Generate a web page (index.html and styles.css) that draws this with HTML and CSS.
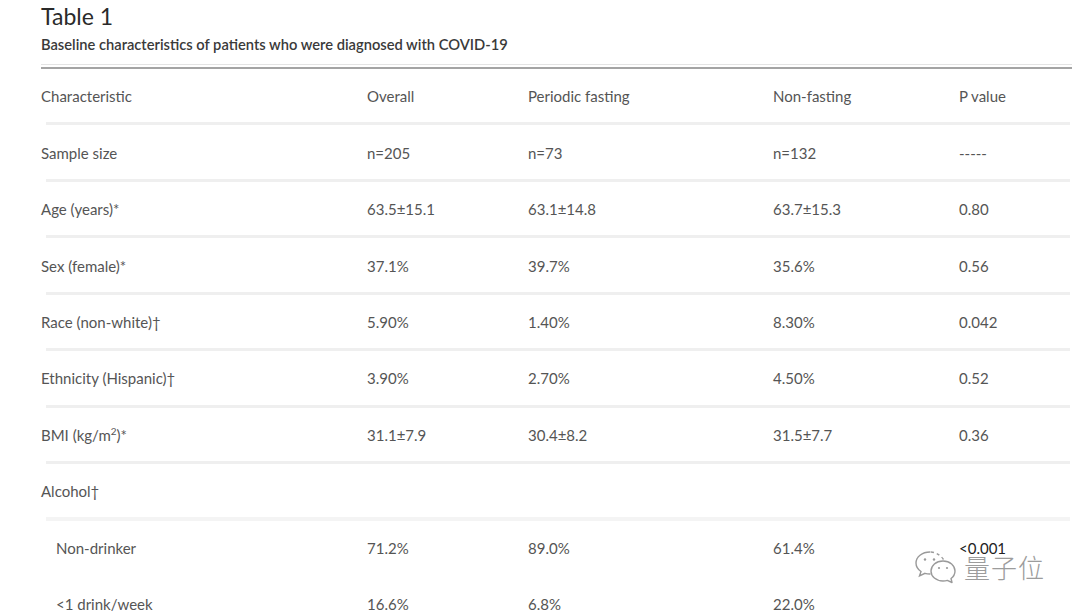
FILE: index.html
```html
<!DOCTYPE html>
<html lang="en">
<head>
<meta charset="utf-8">
<title>Table 1</title>
<link rel="stylesheet" href="styles.css">
</head>
<body>
<div class="page">
  <h1 class="title">Table 1</h1>
  <p class="subtitle">Baseline characteristics of patients who were diagnosed with COVID-19</p>
  <div class="table">
    <div class="row head">
      <div class="cell">Characteristic</div>
      <div class="cell">Overall</div>
      <div class="cell">Periodic fasting</div>
      <div class="cell">Non-fasting</div>
      <div class="cell">P value</div>
    </div>
    <div class="row">
      <div class="cell">Sample size</div>
      <div class="cell">n=205</div>
      <div class="cell">n=73</div>
      <div class="cell">n=132</div>
      <div class="cell">-----</div>
    </div>
    <div class="row">
      <div class="cell">Age (years)*</div>
      <div class="cell">63.5±15.1</div>
      <div class="cell">63.1±14.8</div>
      <div class="cell">63.7±15.3</div>
      <div class="cell">0.80</div>
    </div>
    <div class="row">
      <div class="cell">Sex (female)*</div>
      <div class="cell">37.1%</div>
      <div class="cell">39.7%</div>
      <div class="cell">35.6%</div>
      <div class="cell">0.56</div>
    </div>
    <div class="row">
      <div class="cell">Race (non-white)†</div>
      <div class="cell">5.90%</div>
      <div class="cell">1.40%</div>
      <div class="cell">8.30%</div>
      <div class="cell">0.042</div>
    </div>
    <div class="row">
      <div class="cell">Ethnicity (Hispanic)†</div>
      <div class="cell">3.90%</div>
      <div class="cell">2.70%</div>
      <div class="cell">4.50%</div>
      <div class="cell">0.52</div>
    </div>
    <div class="row">
      <div class="cell">BMI (kg/m<sup>2</sup>)*</div>
      <div class="cell">31.1±7.9</div>
      <div class="cell">30.4±8.2</div>
      <div class="cell">31.5±7.7</div>
      <div class="cell">0.36</div>
    </div>
    <div class="row group">
      <div class="cell">Alcohol†</div>
      <div class="cell"></div>
      <div class="cell"></div>
      <div class="cell"></div>
      <div class="cell"></div>
    </div>
    <div class="row sub nosep">
      <div class="cell">Non-drinker</div>
      <div class="cell">71.2%</div>
      <div class="cell">89.0%</div>
      <div class="cell">61.4%</div>
      <div class="cell dark">&lt;0.001</div>
    </div>
    <div class="row sub">
      <div class="cell">&lt;1 drink/week</div>
      <div class="cell">16.6%</div>
      <div class="cell">6.8%</div>
      <div class="cell">22.0%</div>
      <div class="cell"></div>
    </div>
  </div>
</div>
<div class="watermark">
  <svg class="wm-icon" width="46" height="34" viewBox="0 0 46 34" aria-hidden="true">
    <path d="M16 2 C8 2 2 7 2 13 C2 16.5 4 19.5 7 21.5 L5.5 26 L11 23.3 C12.5 23.8 14.2 24 16 24" fill="none" stroke="#9a9a9a" stroke-width="1.4" stroke-linecap="round"/>
    <path d="M29.5 9.5 C26.5 5 21.5 2 16 2" fill="none" stroke="#9a9a9a" stroke-width="1.4" stroke-dasharray="3 3"/>
    <circle cx="11" cy="9.5" r="1.2" fill="#9a9a9a"/>
    <circle cx="20" cy="9.5" r="1.2" fill="#9a9a9a"/>
    <path d="M29 11 C22 11 17 15.5 17 21 C17 26.5 22 31 29 31 C30.5 31 32 30.8 33.3 30.4 L38 32.5 L37 28.5 C39.5 26.7 41 24 41 21 C41 15.5 36 11 29 11 Z" fill="#fff" stroke="#9a9a9a" stroke-width="1.4" stroke-linejoin="round"/>
    <circle cx="25" cy="18" r="1.1" fill="#9a9a9a"/>
    <circle cx="33" cy="18" r="1.1" fill="#9a9a9a"/>
  </svg>
  <span class="wm-text">量子位</span>
</div>
</body>
</html>
```

FILE: styles.css
```css
html, body {
  margin: 0;
  padding: 0;
  background: #ffffff;
}

body {
  width: 1080px;
  height: 614px;
  overflow: hidden;
  position: relative;
  font-family: Lato, "Noto Sans", "Liberation Sans", sans-serif;
  color: #555555;
}

.page {
  padding: 3px 8px 0 41px;
}

.title {
  margin: 0;
  font-size: 23px;
  line-height: 26px;
  font-weight: 400;
  color: #2a2a2a;
}

.subtitle {
  margin: 6px 0 0;
  font-size: 14.7px;
  line-height: 18px;
  font-weight: 600;
  color: #3a3a3a;
}

.table {
  margin-top: 14px;
  border-top: 2px solid #a4a4a4;
  box-shadow: 0 -2px 0 #ffffff, 0 -3px 0 #e4e4e4;
}

.row {
  display: grid;
  grid-template-columns: 326px 161px 245px 186px 1fr;
  align-items: center;
  height: 56.45px;
  box-sizing: border-box;
  padding-top: 1px;
  padding-bottom: 3px;
  font-size: 15px;
  line-height: 18px;
  background: linear-gradient(#efefef, #efefef) no-repeat 5px 100% / calc(100% - 7px) 3px;
}

.row.group {
  background: linear-gradient(#f4f4f4, #f4f4f4) no-repeat 5px calc(100% + 2px) / calc(100% - 7px) 6px;
}

.row.nosep {
  background: none;
}

.row.sub .cell:first-child {
  padding-left: 15px;
}

.cell {
  white-space: nowrap;
}

.cell.dark {
  color: #222222;
}

sup {
  font-size: 10px;
  line-height: 0;
}

.watermark {
  position: absolute;
  left: 914px;
  top: 550px;
  display: flex;
  align-items: center;
  gap: 4px;
}

.wm-text {
  font-family: "Noto Sans CJK SC", sans-serif;
  font-size: 26px;
  line-height: 30px;
  font-weight: 300;
  color: #9c9c9c;
  letter-spacing: 1px;
  text-shadow: 0 0 2px #ffffff, 0 0 2px #ffffff;
}
```
